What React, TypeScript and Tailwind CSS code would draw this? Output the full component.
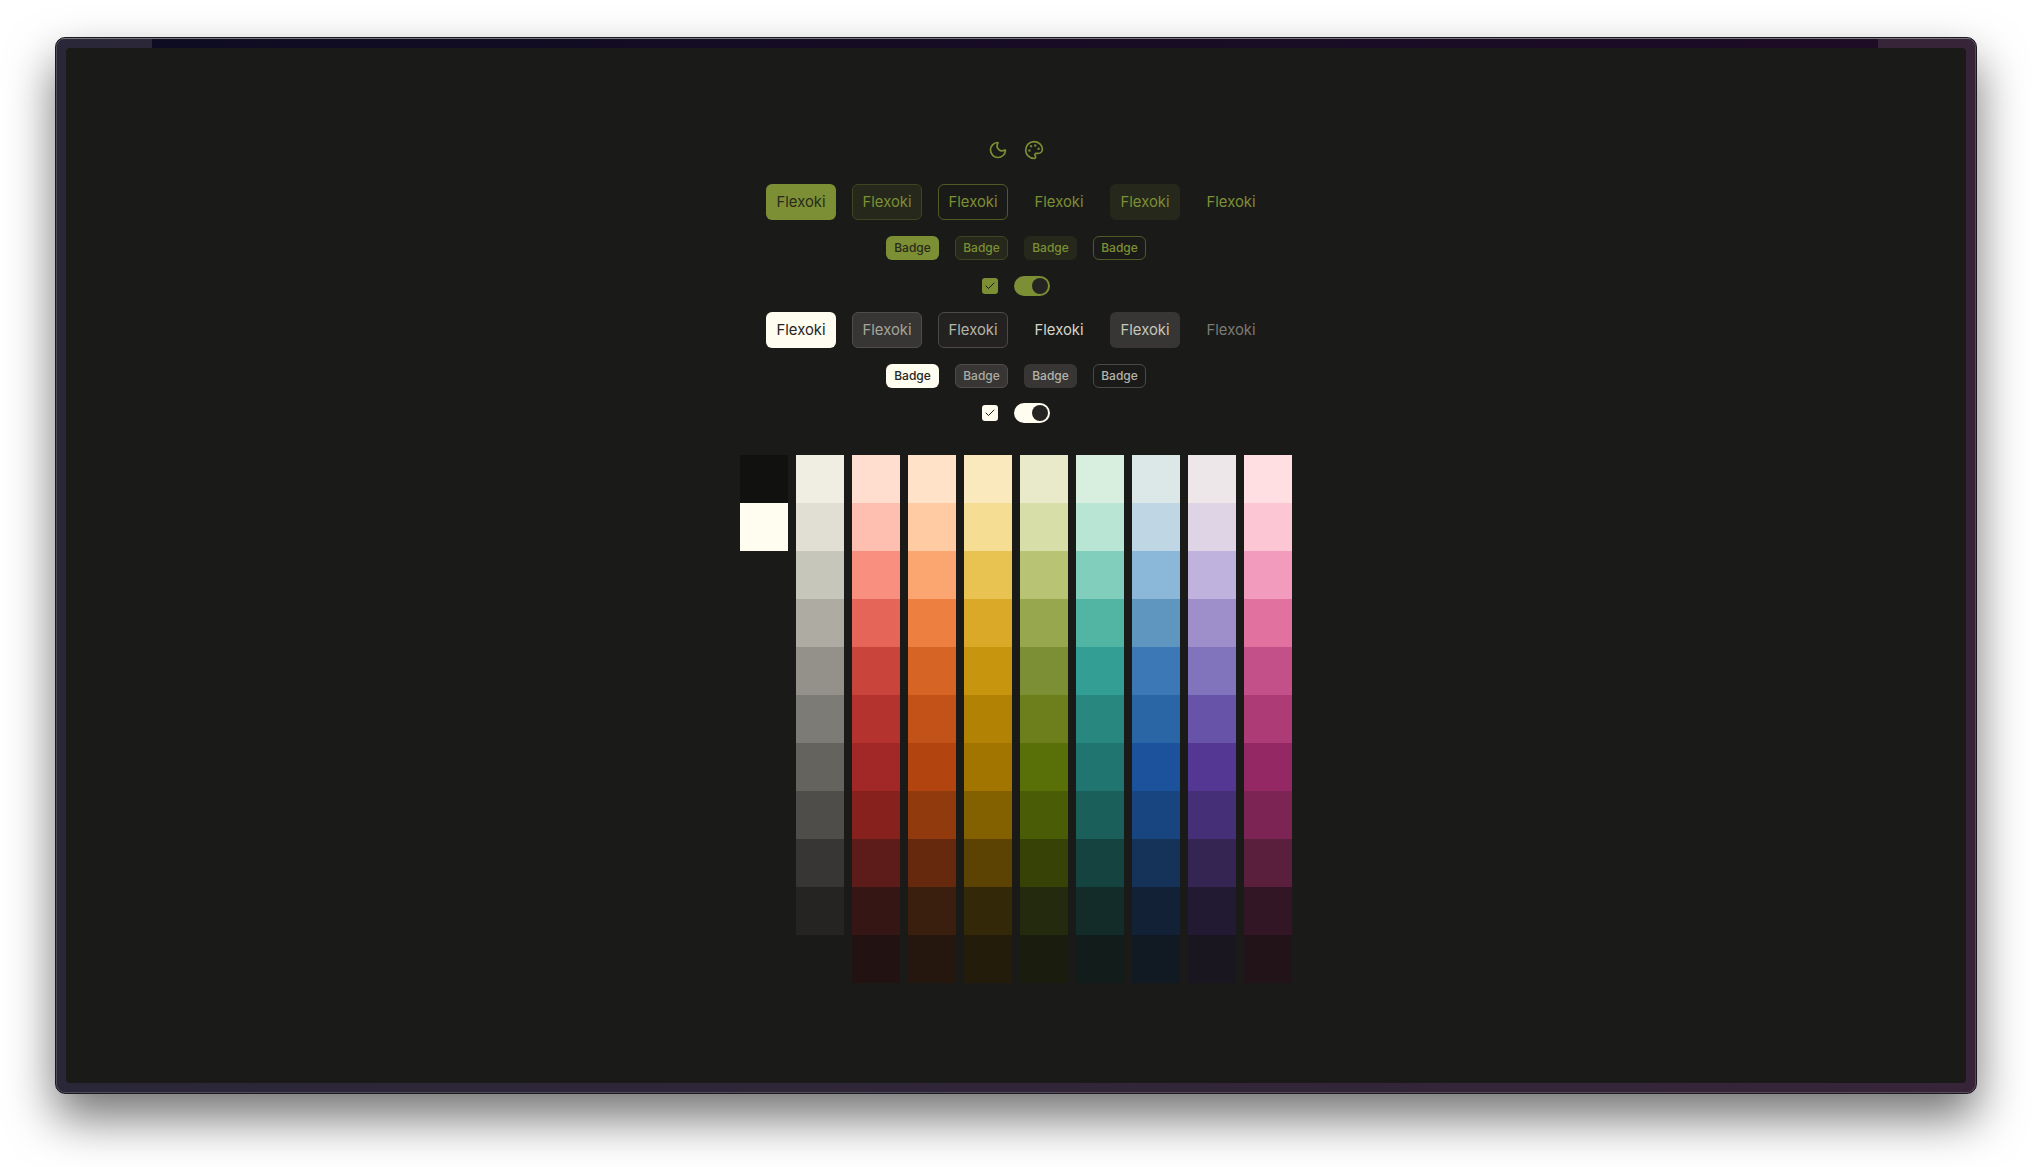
import { Check, Moon, Palette } from "lucide-react";

const swatches: string[][] = [
  ["#111110", "#FFFCF0"],
  ["#F0EEE2", "#E1DFD4", "#C6C6BA", "#ADABA2", "#94918A", "#7C7B75", "#64635E", "#4E4D49", "#373634", "#252422", "#1A1A18"],
  ["#FFDDCF", "#FFBFB0", "#F98F7F", "#E56658", "#C9443A", "#B5332F", "#A12826", "#86211E", "#5D1B1A", "#351614", "#221312"],
  ["#FFE2C8", "#FFCBA3", "#FBA670", "#ED7F41", "#D56425", "#C25218", "#B24410", "#903A0D", "#67290D", "#3A1F0E", "#25170E"],
  ["#F9E9BD", "#F5DE94", "#E8C352", "#D9A927", "#C8950F", "#B28205", "#A27500", "#836000", "#5C4203", "#332807", "#231C0B"],
  ["#E9EAC9", "#D8DEA8", "#B8C374", "#97A74D", "#7C8F34", "#6C7F1C", "#597008", "#4A5D06", "#364206", "#242A0E", "#1A1C0E"],
  ["#D8EFDF", "#B9E6D4", "#82CEBC", "#52B5A3", "#329E94", "#288880", "#207570", "#1A5F5A", "#154440", "#132B29", "#121D1B"],
  ["#DCE8E8", "#BFD7E5", "#8BB8D9", "#5E96C0", "#3B78B5", "#2A65A6", "#1C529B", "#184580", "#153259", "#122135", "#111A22"],
  ["#EEE7EA", "#DFD4E6", "#BFB2DC", "#9E8EC9", "#8273BD", "#6753A8", "#533792", "#452F76", "#352553", "#221A33", "#191620"],
  ["#FFDFE1", "#FDC6D5", "#F29BBC", "#E1719E", "#C4508A", "#AC3B76", "#932864", "#7C2454", "#5A1F3D", "#331626", "#221319"],
];

const buttonBase = "flex h-[36px] w-[70px] items-center justify-center rounded-md text-[14.8px] leading-5";
const badgeBase = "flex h-[24px] w-[53px] items-center justify-center rounded-md text-[12px] font-medium leading-4";

const accentButtons = [
  "bg-[#7C8F34] text-[#2A2A1C]",
  "border border-[#3F4520] bg-[#25281A] text-[#7C8F34]",
  "border border-[#505A25] text-[#7C8F34]",
  "text-[#7C8F34]",
  "bg-[#25281A] text-[#7C8F34]",
  "text-[#7C8F34]",
];

const accentBadges = [
  "bg-[#7C8F34] text-[#2A2A1C]",
  "border border-[#3F4520] bg-[#25281A] text-[#7C8F34]",
  "bg-[#25281A] text-[#7C8F34]",
  "border border-[#505A25] text-[#7C8F34]",
];

const neutralButtons = [
  "bg-[#FFFCF0] text-[#252422]",
  "border border-[#4E4D49] bg-[#373634] text-[#A5A49B]",
  "border border-[#4A4946] bg-[#232220] text-[#B5B4AA]",
  "text-[#D6D5CA]",
  "bg-[#373634] text-[#C6C6BA]",
  "text-[#7C7B75]",
];

const neutralBadges = [
  "bg-[#FFFCF0] text-[#252422]",
  "border border-[#4E4D49] bg-[#373634] text-[#ADABA2]",
  "bg-[#373634] text-[#B5B4AA]",
  "border border-[#4A4946] text-[#B5B4AA]",
];

function ControlGroup({ buttons, badges, fill, toggleRow }: { buttons: string[]; badges: string[]; fill: string; toggleRow: string }) {
  return (
    <div className="flex flex-col items-center">
      <div className="flex gap-4">
        {buttons.map((style, i) => (
          <div key={i} className={`${buttonBase} ${style}`}>
            Flexoki
          </div>
        ))}
      </div>
      <div className="mt-4 flex gap-4">
        {badges.map((style, i) => (
          <div key={i} className={`${badgeBase} ${style}`}>
            Badge
          </div>
        ))}
      </div>
      <div className={`flex h-5 items-center gap-4 ${toggleRow}`}>
        <div className={`flex h-4 w-4 items-center justify-center rounded-[3px] ${fill}`}>
          <Check className="h-3 w-3 text-[#1A1A18]" strokeWidth={2} />
        </div>
        <div className={`flex h-5 w-9 items-center justify-end rounded-full pr-0.5 ${fill}`}>
          <div className="h-4 w-4 rounded-full bg-[#252422]" />
        </div>
      </div>
    </div>
  );
}

export default function App() {
  return (
    <div className="flex min-h-screen justify-center bg-white pt-[37px] font-['Inter',sans-serif]">
      <div className="flex h-[1057px] w-[1922px] flex-col overflow-hidden rounded-[10px] border border-[#1A1A1E] bg-gradient-to-r from-[#2A2738] to-[#372439] px-[10px] pb-[10px] shadow-[inset_0_0_0_1px_rgba(255,255,255,0.18),0_24px_48px_rgba(0,0,0,0.55)]">
        <div className="-mx-[10px] flex h-[10px] shrink-0 border-t border-[#77767C]">
          <div className="w-[96px]" />
          <div className="flex-1 bg-gradient-to-r from-[#0E0C22] to-[#1E0B26]" />
          <div className="w-[98px]" />
        </div>
        <div className="flex flex-1 flex-col items-center rounded-[4px] bg-[#1A1A18] pt-[92px]">
          <div className="flex gap-4 text-[#7C8F34]">
            <Moon className="h-5 w-5" strokeWidth={2} />
            <Palette className="h-5 w-5" strokeWidth={2} />
          </div>
          <div className="mt-6 flex flex-col gap-4">
            <ControlGroup buttons={accentButtons} badges={accentBadges} fill="bg-[#7C8F34]" toggleRow="mt-4" />
            <ControlGroup buttons={neutralButtons} badges={neutralBadges} fill="bg-[#FFFCF0]" toggleRow="mt-[15px]" />
          </div>
          <div className="mt-8 flex gap-2">
            {swatches.map((column, i) => (
              <div key={i} className="flex w-12 flex-col">
                {column.map((color) => (
                  <div key={color} className="h-12 w-12" style={{ backgroundColor: color }} />
                ))}
              </div>
            ))}
          </div>
        </div>
      </div>
    </div>
  );
}
